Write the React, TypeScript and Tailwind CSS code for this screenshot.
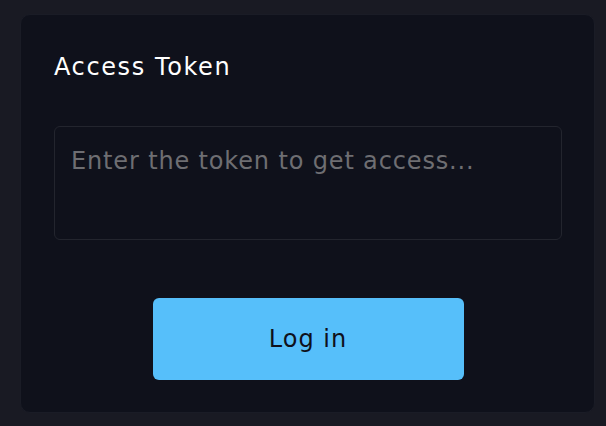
export default function App() {
  return (
    <div
      className="w-[606px] h-[426px] bg-[#191a23] pl-[20px] pr-[11px] pt-[14px] pb-[13px] flex"
      style={{ fontFamily: '"DejaVu Sans", "Noto Sans", sans-serif' }}
    >
      <div className="flex-1 rounded-[10px] bg-[#0f111b] border border-[#1a1c26] pl-[33px] pr-[32px] pt-[36px] flex flex-col">
        <div className="text-[24px] leading-[32px] text-white font-normal tracking-[1.6px]">Access Token</div>
        <textarea
          className="mt-[43px] h-[114px] w-full resize-none rounded-[6px] border border-[#23252e] bg-[#0f111b] px-[16px] py-[18px] text-[24px] leading-[32px] tracking-[0.85px] text-white placeholder:text-[#6e6e72] outline-none"
          placeholder="Enter the token to get access..."
        />
        <div className="flex justify-center mt-[58px]">
          <button className="w-[311px] h-[82px] rounded-[6px] bg-[#56bffa] text-[#0f111b] text-[24px] leading-[32px] tracking-[1px]">
            Log in
          </button>
        </div>
      </div>
    </div>
  );
}
